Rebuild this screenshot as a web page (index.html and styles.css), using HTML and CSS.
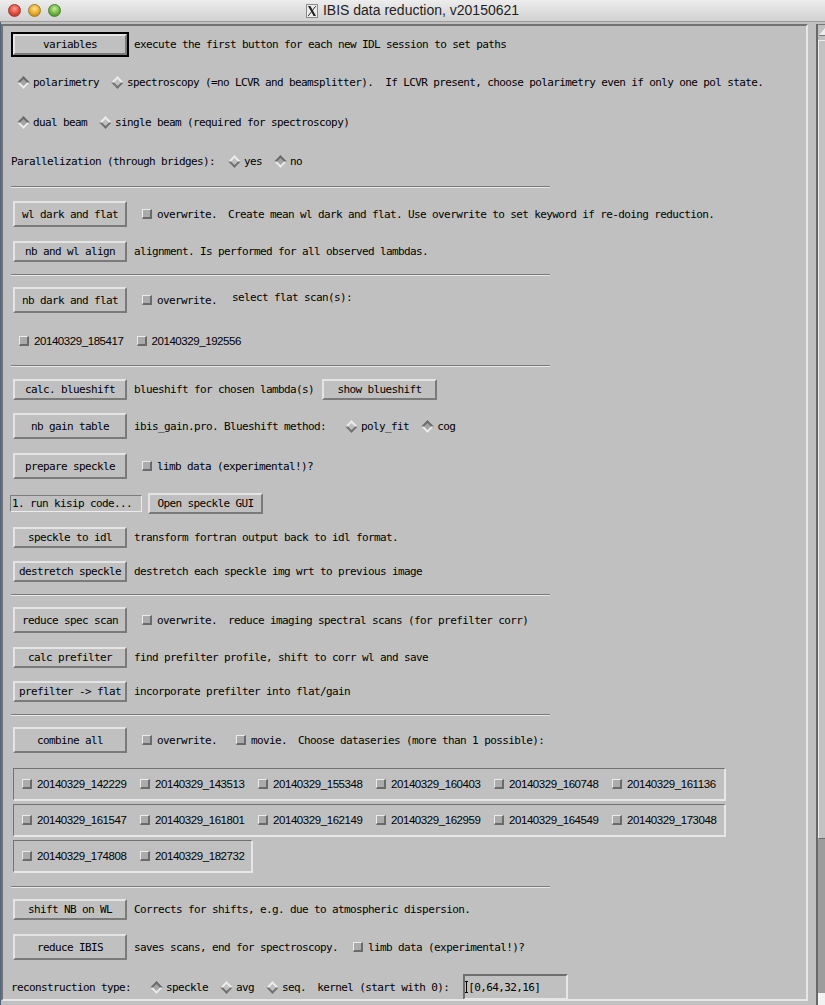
FILE: index.html
```html
<!DOCTYPE html>
<html>
<head>
<meta charset="utf-8">
<title>IBIS data reduction, v20150621</title>
<link rel="stylesheet" href="styles.css">
</head>
<body>
<div class="window">
  <div class="titlebar">
    <div class="lights"><span class="light red"></span><span class="light yellow"></span><span class="light green"></span></div>
    <div class="title">
      <svg class="xicon" width="12" height="14" viewBox="0 0 12 14"><rect x="0.5" y="0.5" width="11" height="13" fill="#ececec" stroke="#8a8a8a"/><polygon points="2,2 4.4,2 10,12 7.6,12" fill="#222"/><line x1="9.8" y1="2" x2="2.2" y2="12" stroke="#222" stroke-width="0.9"/></svg>
      <span>IBIS data reduction, v20150621</span>
    </div>
    <div></div>
  </div>
  <div class="client">
    <div class="viewport">
      <div class="content">
        <div class="row mt6 h25"><button class="btn focus">variables</button><span class="after">execute the first button for each new IDL session to set paths</span></div>

        <div class="row mt13 h24 radios indent"><span class="radio"><i class="dia on"></i>polarimetry</span><span class="radio"><i class="dia"></i>spectroscopy (=no LCVR and beamsplitter).  If LCVR present, choose polarimetry even if only one pol state.</span></div>

        <div class="row mt16 h24 radios indent"><span class="radio"><i class="dia on"></i>dual beam</span><span class="radio"><i class="dia"></i>single beam (required for spectroscopy)</span></div>

        <div class="row mt15 h24"><span class="lead">Parallelization (through bridges):</span><span class="radios"><span class="radio"><i class="dia"></i>yes</span><span class="radio"><i class="dia on"></i>no</span></span></div>

        <div class="sep mt13"></div>

        <div class="row mt13 h26"><button class="btn tall">wl dark and flat</button><span class="opts"><span class="check"><i class="cb"></i>overwrite.</span></span><span class="note">Create mean wl dark and flat. Use overwrite to set keyword if re-doing reduction.</span></div>

        <div class="row mt14 h21"><button class="btn">nb and wl align</button><span class="after">alignment. Is performed for all observed lambdas.</span></div>

        <div class="sep mt12"></div>

        <div class="row mt11 h26"><button class="btn tall">nb dark and flat</button><span class="opts"><span class="check"><i class="cb"></i>overwrite.</span></span><span class="note wide up">select flat scan(s):</span></div>

        <div class="row mt16 h24 dates"><span class="check"><i class="cb"></i><span class="date">20140329_185417</span></span><span class="check"><i class="cb"></i><span class="date">20140329_192556</span></span></div>

        <div class="sep mt12"></div>

        <div class="row mt12 h21"><button class="btn">calc. blueshift</button><span class="after">blueshift for chosen lambda(s)</span><button class="btn show">show blueshift</button></div>

        <div class="row mt13 h26"><button class="btn tall">nb gain table</button><span class="after">ibis_gain.pro. Blueshift method:</span><span class="radios offset"><span class="radio"><i class="dia"></i>poly_fit</span><span class="radio"><i class="dia on"></i>cog</span></span></div>

        <div class="row mt14 h26"><button class="btn tall">prepare speckle</button><span class="opts"><span class="check"><i class="cb"></i>limb data (experimental!)?</span></span></div>

        <div class="row mt14 h21"><span class="boxlabel">1. run kisip code...</span><button class="btn gui">Open speckle GUI</button></div>

        <div class="row mt13 h21"><button class="btn">speckle to idl</button><span class="after">transform fortran output back to idl format.</span></div>

        <div class="row mt13 h21"><button class="btn">destretch speckle</button><span class="after">destretch each speckle img wrt to previous image</span></div>

        <div class="sep mt12"></div>

        <div class="row mt11 h26"><button class="btn tall">reduce spec scan</button><span class="opts"><span class="check"><i class="cb"></i>overwrite.</span></span><span class="note">reduce imaging spectral scans (for prefilter corr)</span></div>

        <div class="row mt14 h21"><button class="btn">calc prefilter</button><span class="after">find prefilter profile, shift to corr wl and save</span></div>

        <div class="row mt13 h21"><button class="btn">prefilter -&gt; flat</button><span class="after">incorporate prefilter into flat/gain</span></div>

        <div class="sep mt12"></div>

        <div class="row mt11 h26"><button class="btn tall">combine all</button><span class="opts"><span class="check"><i class="cb"></i>overwrite.</span><span class="check far"><i class="cb"></i>movie.</span></span><span class="note">Choose dataseries (more than 1 possible):</span></div>

        <div class="dbox mt15">
          <span class="ditem"><i class="cb"></i><span class="date">20140329_142229</span></span>
          <span class="ditem"><i class="cb"></i><span class="date">20140329_143513</span></span>
          <span class="ditem"><i class="cb"></i><span class="date">20140329_155348</span></span>
          <span class="ditem"><i class="cb"></i><span class="date">20140329_160403</span></span>
          <span class="ditem"><i class="cb"></i><span class="date">20140329_160748</span></span>
          <span class="ditem"><i class="cb"></i><span class="date">20140329_161136</span></span>
        </div>
        <div class="dbox mt3">
          <span class="ditem"><i class="cb"></i><span class="date">20140329_161547</span></span>
          <span class="ditem"><i class="cb"></i><span class="date">20140329_161801</span></span>
          <span class="ditem"><i class="cb"></i><span class="date">20140329_162149</span></span>
          <span class="ditem"><i class="cb"></i><span class="date">20140329_162959</span></span>
          <span class="ditem"><i class="cb"></i><span class="date">20140329_164549</span></span>
          <span class="ditem"><i class="cb"></i><span class="date">20140329_173048</span></span>
        </div>
        <div class="dbox short mt3">
          <span class="ditem"><i class="cb"></i><span class="date">20140329_174808</span></span>
          <span class="ditem"><i class="cb"></i><span class="date">20140329_182732</span></span>
        </div>

        <div class="sep mt13"></div>

        <div class="row mt11 h21"><button class="btn">shift NB on WL</button><span class="after">Corrects for shifts, e.g. due to atmospheric dispersion.</span></div>

        <div class="row mt14 h26"><button class="btn tall">reduce IBIS</button><span class="after">saves scans, end for spectroscopy.</span><span class="opts"><span class="check"><i class="cb"></i>limb data (experimental!)?</span></span></div>

        <div class="row mt14 h26"><span class="lead2">reconstruction type:</span><span class="radios offset"><span class="radio"><i class="dia on"></i>speckle</span><span class="radio"><i class="dia"></i>avg</span><span class="radio"><i class="dia"></i>seq.</span></span><span class="note">kernel (start with 0):</span><span class="tfield"><i class="caret"></i>[0,64,32,16]</span></div>
      </div>
    </div>
    <div class="scrollbar">
      <div class="sb-up"><svg width="7" height="12" viewBox="0 0 7 12"><polygon points="1,10 7,3 7,10" fill="#ececec"/><line x1="1" y1="10.5" x2="7" y2="10.5" stroke="#777"/></svg></div>
      <div class="sb-thumb"></div>
      <div class="sb-trough"></div>
      <div class="sb-corner"></div>
    </div>
  </div>
</div>
</body>
</html>
```

FILE: styles.css
```css
* { box-sizing: border-box; }
html, body { margin: 0; padding: 0; }
body {
  width: 825px;
  height: 1005px;
  overflow: hidden;
  background: #c0c0c0;
  color: #000;
  font-family: "DejaVu Sans Mono", monospace;
  font-size: 11px;
  letter-spacing: -0.62px;
  line-height: 13px;
}
.window { width: 825px; height: 1005px; display: flex; flex-direction: column; }

/* title bar */
.titlebar {
  flex: none;
  height: 22px;
  display: grid;
  grid-template-columns: 1fr auto 1fr;
  align-items: center;
  background: linear-gradient(#ededed, #d1d1d1);
  border-bottom: 1px solid #9c9c9c;
  font-family: "Liberation Sans", Arial, sans-serif;
  letter-spacing: 0;
}
.lights { display: flex; gap: 7px; padding-left: 8px; }
.light { width: 13px; height: 13px; border-radius: 50%; }
.red { background: radial-gradient(circle at 50% 35%, #ff9d90 0%, #e04a3d 55%, #a82a20 100%); border: 1px solid #9e3a30; }
.yellow { background: radial-gradient(circle at 50% 35%, #ffe28a 0%, #e6a92c 55%, #a87414 100%); border: 1px solid #a07a2a; }
.green { background: radial-gradient(circle at 50% 35%, #c3f0a0 0%, #6db43e 55%, #3f7d20 100%); border: 1px solid #4d7f33; }
.title { display: flex; align-items: center; gap: 5px; font-size: 14px; color: #1e1e1e; }
.xicon { display: block; }

/* client */
.client { flex: 1; display: flex; background: #c0c0c0; border-left: 1px solid #55637f; }
.viewport {
  flex: none;
  width: 807px;
  height: 977px;
  margin-top: 2px;
  overflow: hidden;
  border: 2px solid;
  border-color: #727272 #e6e6e6 #e6e6e6 #727272;
}
.content { padding-left: 8px; display: flex; flex-direction: column; align-items: flex-start; }

.row { display: flex; align-items: center; white-space: pre; flex: none; }
.mt3 { margin-top: 3px; }
.mt6 { margin-top: 6px; }
.mt11 { margin-top: 11px; }
.mt12 { margin-top: 12px; }
.mt13 { margin-top: 13px; }
.mt14 { margin-top: 14px; }
.mt15 { margin-top: 15px; }
.mt16 { margin-top: 16px; }
.h21 { height: 21px; }
.h24 { height: 24px; }
.h25 { height: 25px; }
.h26 { height: 26px; }

/* buttons */
.btn {
  flex: none;
  width: 114px;
  height: 21px;
  margin: 0 0 0 2px;
  padding: 0;
  border: 2px solid;
  border-color: #e4e4e4 #7a7a7a #7a7a7a #e4e4e4;
  border-radius: 0;
  background: #c0c0c0;
  color: #000;
  font: inherit;
  letter-spacing: inherit;
  line-height: 13px;
  text-align: center;
  white-space: pre;
}
.btn.tall { height: 26px; }
.btn.focus { outline: 2px solid #000; outline-offset: 0; }
.btn.show { width: 115px; margin-left: 8px; }
.btn.gui { width: 115px; margin-left: 6px; }

.after { margin-left: 7px; }
.note { margin-left: 11px; }
.note.wide { margin-left: 15px; }
.up { margin-bottom: 6px; }
.lead { margin-right: 13px; }

/* radio diamonds */
.radios { display: flex; align-items: center; gap: 12px; }
.radios.indent { padding-left: 6px; }
.radios.offset { margin-left: 19px; }
.radio { display: inline-flex; align-items: center; }
.dia {
  display: block;
  width: 9px;
  height: 9px;
  margin: 0 5px 0 2px;
  border: 2px solid;
  border-color: #ececec #707070 #707070 #ececec;
  background: #c0c0c0;
  transform: rotate(45deg);
}
.dia.on {
  border-color: #6a6a6a #ececec #ececec #6a6a6a;
  background: #a4a4a4;
}

/* checkboxes */
.opts { display: flex; align-items: center; margin-left: 15px; }
.check { display: inline-flex; align-items: center; }
.check.far { margin-left: 19px; }
.cb {
  display: block;
  flex: none;
  width: 10px;
  height: 10px;
  margin-right: 5px;
  border-style: solid;
  border-width: 1px 2px 2px 1px;
  border-color: #ececec #6a6a6a #6a6a6a #ececec;
  background: #ababab;
}
.dates { padding-left: 8px; }
.dates .check + .check { margin-left: 13px; }
.date {
  font-family: "Liberation Sans", Arial, sans-serif;
  font-size: 11.5px;
  letter-spacing: -0.43px;
}

/* separators */
.sep {
  flex: none;
  width: 539px;
  height: 2px;
  border-top: 1px solid #7a7a7a;
  border-bottom: 1px solid #e8e8e8;
}

/* label box */
.boxlabel {
  display: flex;
  align-items: center;
  width: 132px;
  height: 17px;
  margin-left: -1px;
  padding-left: 1px;
  border: 1px solid;
  border-color: #7c7c7c #ececec #ececec #7c7c7c;
}

/* dataseries frames */
.dbox {
  flex: none;
  display: flex;
  align-items: center;
  width: 713px;
  height: 33px;
  margin-left: 2px;
  padding-left: 8px;
  border-style: solid;
  border-width: 1px 2px 2px 1px;
  border-color: #727272 #e6e6e6 #e6e6e6 #727272;
  white-space: pre;
}
.dbox.short { width: 240px; }
.ditem { display: inline-flex; align-items: center; width: 118px; flex: none; }
.ditem:last-child { width: auto; }

/* text field */
.lead2 { margin-left: 0; }
.tfield {
  display: flex;
  align-items: center;
  width: 105px;
  height: 26px;
  margin-left: 14px;
  border: 2px solid;
  border-color: #6e6e6e #e6e6e6 #e6e6e6 #6e6e6e;
}
.caret {
  display: flex;
  justify-content: center;
  width: 3px;
  height: 12px;
  border-top: 1px solid #000;
  border-bottom: 1px solid #000;
}
.caret::before { content: ""; width: 1px; background: #000; }

/* scrollbar */
.scrollbar {
  flex: none;
  display: flex;
  flex-direction: column;
  width: 9px;
  margin-left: 8px;
  margin-top: 2px;
  border-left: 2px solid #686868;
}
.sb-up { height: 16px; background: #c0c0c0; border-top: 1px solid #777; }
.sb-up svg { display: block; }
.sb-thumb {
  height: 799px;
  background: #c2c2c2;
  border-left: 1px solid #ececec;
  border-top: 1px solid #ececec;
  border-bottom: 1px solid #6a6a6a;
}
.sb-trough { flex: 1; background: #9c9c9c; }
.sb-corner { height: 12px; background: #f2f2f2; }
```
